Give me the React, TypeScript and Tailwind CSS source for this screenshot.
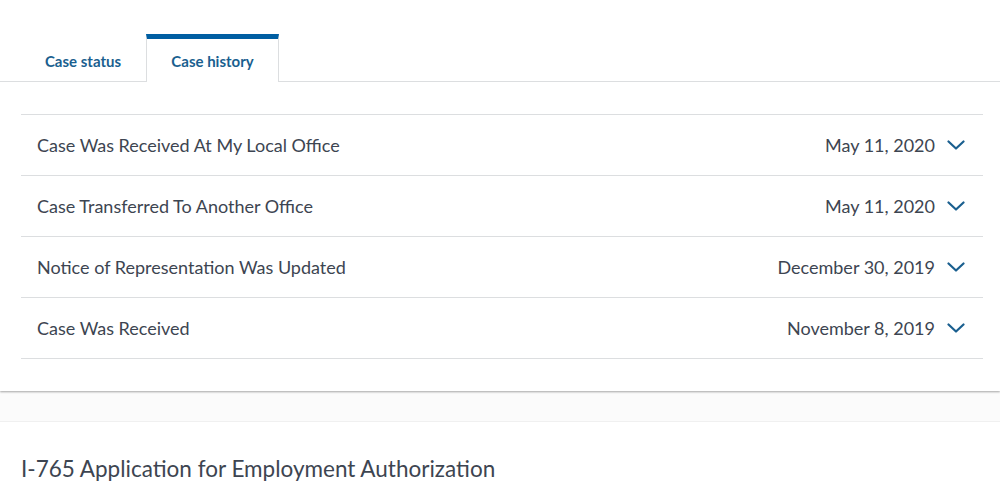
const events = [
  { title: "Case Was Received At My Local Office", date: "May 11, 2020" },
  { title: "Case Transferred To Another Office", date: "May 11, 2020" },
  { title: "Notice of Representation Was Updated", date: "December 30, 2019" },
  { title: "Case Was Received", date: "November 8, 2019" },
];

function Chevron() {
  return (
    <svg width="18" height="10" viewBox="0 0 18 10" fill="none">
      <polyline
        points="1.5,1.5 9,8.5 16.5,1.5"
        stroke="#1a5f8f"
        strokeWidth="2.2"
        strokeLinecap="round"
        strokeLinejoin="round"
      />
    </svg>
  );
}

export default function App() {
  return (
    <div
      className="min-h-screen bg-[#fbfbfb] text-[#3d4551]"
      style={{ fontFamily: "Lato, 'Open Sans', sans-serif" }}
    >
      {/* Case card */}
      <div className="bg-white shadow-[0_1px_2px_rgba(0,0,0,0.35)]">
        <div className="h-[34px]" />
        {/* Tabs */}
        <div className="flex border-b border-[#dcdee0]">
          <button className="w-[146px] h-[47px] pt-[7px] pl-[20px] text-[15px] font-bold text-[#1a5f8f]">
            Case status
          </button>
          <button className="relative -mb-px w-[133px] h-[48px] pt-[1px] border-x border-[#dcdee0] border-t-[5px] border-t-[#005ea2] bg-white text-[15px] font-bold text-[#1a5f8f]">
            Case history
          </button>
        </div>

        {/* History list */}
        <div className="pl-[21px] pr-[17px] py-[32px]">
          <div className="border-t border-[#dcdee0]">
            {events.map((e) => (
              <div
                key={e.title}
                className="flex items-center justify-between h-[61px] pl-4 pr-[18px] border-b border-[#dcdee0]"
              >
                <span className="text-[18px] text-[#3d4551]">{e.title}</span>
                <span className="flex items-center gap-[12px]">
                  <span className="text-[18px] text-[#3d4551]">{e.date}</span>
                  <Chevron />
                </span>
              </div>
            ))}
          </div>
        </div>
      </div>

      <div className="h-[30px]" />

      {/* Next card */}
      <div className="bg-white border-t border-[#f0f0f0] px-[21px] pt-[30px] pb-6">
        <h2 className="text-[22.5px] text-[#3d4551]">
          I-765 Application for Employment Authorization
        </h2>
      </div>
    </div>
  );
}
